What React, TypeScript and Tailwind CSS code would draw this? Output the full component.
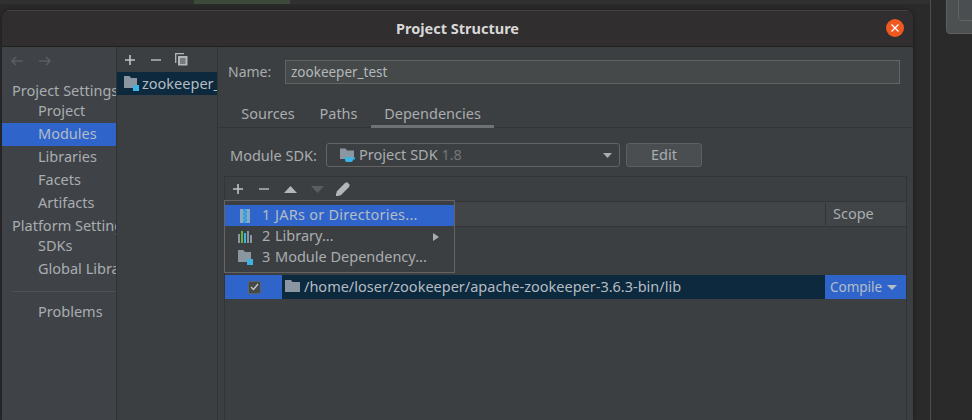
import React from "react";

const font = { fontFamily: '"Noto Sans", "Open Sans", sans-serif' };

function ModuleIcon() {
  return (
    <svg width="15" height="15" viewBox="0 0 15 15" className="shrink-0">
      <path d="M0 0h5.5L7 2h6v10H8v-3H0z" fill="#8a96a1" />
      <path d="M0 2h8v10H0z" fill="#8a96a1" />
      <rect x="9" y="9" width="6" height="6" fill="#3db3e3" />
    </svg>
  );
}

function Plus() {
  return (
    <svg width="12" height="12" viewBox="0 0 12 12" className="shrink-0">
      <path d="M6 1v10M1 6h10" stroke="#c0c4c6" strokeWidth="1.6" />
    </svg>
  );
}

function Minus() {
  return (
    <svg width="12" height="12" viewBox="0 0 12 12" className="shrink-0">
      <path d="M1 6h10" stroke="#b3b7b9" strokeWidth="1.6" />
    </svg>
  );
}

function SideItem({ label, active, h = "h-[23px] leading-[21px]" }: { label: string; active?: boolean; h?: string }) {
  return (
    <div className={`pl-[36px] whitespace-nowrap ${h} ${active ? "bg-[#2f65ca] text-[#b4bcc6]" : ""}`}>
      {label}
    </div>
  );
}

function SideHead({ label, h }: { label: string; h: string }) {
  return <div className={`pl-[10px] whitespace-nowrap ${h}`}>{label}</div>;
}

function MenuRow({ n, label, active, arrow, icon, wide }: { n: string; label: string; active?: boolean; arrow?: boolean; icon: React.ReactNode; wide?: boolean }) {
  return (
    <div className={`h-[21px] flex items-center relative whitespace-nowrap text-[14.5px] leading-[19px] ${active ? "bg-[#2f65ca] text-[#b4bcc6]" : "text-[#a9adb0]"}`}>
      <div className="w-[37px] pl-[14px] flex shrink-0">{icon}</div>
      <span className="w-[13px] -mt-[2px]">{n}</span>
      <span className={wide ? "tracking-[0.25px] -mt-[2px]" : "-mt-[2px]"}>{label}</span>
      {arrow && (
        <svg width="6" height="8" viewBox="0 0 6 8" className="absolute right-[15px] top-[7px]">
          <path d="M0 0l6 4-6 4z" fill="#a9adb0" />
        </svg>
      )}
    </div>
  );
}

export default function App() {
  return (
    <div style={font} className="w-[972px] h-[420px] overflow-hidden bg-[#2a2a2a] flex text-[14.5px] text-[#a9adb0]">
      <div className="w-[931px] shrink-0 border-r border-[#4e4e4e] flex flex-col">
        <div className="h-[4px] shrink-0 bg-[#303030] flex">
          <div className="ml-[194px] w-[96px] bg-[#3c4a3a]" />
        </div>
        <div className="ml-[2px] mt-[6px] w-[911px] flex-1 flex flex-col rounded-t-[8px] overflow-hidden shadow-[0_0_4px_#1c1c1c] min-h-0">
          {/* Title bar */}
          <div className="h-[37px] shrink-0 bg-[#302e2e] border-t border-[#464444] border-b-[#1f1f1f] border-b flex items-center relative">
            <div className="flex-1 text-center font-bold text-[14.5px] text-[#d8d8d8]">Project Structure</div>
            <div className="absolute right-[9px] top-[8px] w-[18px] h-[18px] rounded-full bg-[#ef5820] flex items-center justify-center">
              <svg width="8" height="8" viewBox="0 0 8 8">
                <path d="M0.5 0.5l7 7M7.5 0.5l-7 7" stroke="#ffffff" strokeWidth="1.3" />
              </svg>
            </div>
          </div>

          <div className="flex-1 flex min-h-0 bg-[#3c3f41]">
            {/* Settings sidebar */}
            <div className="w-[114px] shrink-0 bg-[#3f4347] border-r border-[#2f3133] overflow-hidden box-content">
              <div className="h-[32px] flex items-center gap-[14px] pl-[8px] pb-[4px]">
                <svg width="14" height="10" viewBox="0 0 14 10"><path d="M13 5H2M6 1L2 5l4 4" stroke="#5a5e61" strokeWidth="1.5" fill="none" /></svg>
                <svg width="14" height="10" viewBox="0 0 14 10"><path d="M1 5h11M8 1l4 4-4 4" stroke="#5a5e61" strokeWidth="1.5" fill="none" /></svg>
              </div>
              <SideHead label="Project Settings" h="h-[22px] leading-[22px]" />
              <SideItem label="Project" h="h-[22px] leading-[19px]" />
              <SideItem label="Modules" active />
              <SideItem label="Libraries" />
              <SideItem label="Facets" />
              <SideItem label="Artifacts" />
              <SideHead label="Platform Settings" h="h-[20px] leading-[20px]" />
              <SideItem label="SDKs" h="h-[22px] leading-[20px]" />
              <SideItem label="Global Libraries" h="h-[23px] leading-[23px]" />
              <div className="ml-[10px] mt-[11px] mb-[9px] h-px bg-[#4e5254]" />
              <SideItem label="Problems" />
            </div>

            {/* Modules column */}
            <div className="w-[100px] shrink-0 border-r border-[#323436] box-content overflow-hidden">
              <div className="h-[25px] flex items-center pl-[7px] gap-[14px]">
                <Plus />
                <Minus />
                <svg width="13" height="13" viewBox="0 0 13 13" className="-ml-[1px]">
                  <path d="M0.7 10V0.7H9" stroke="#b3b7b9" strokeWidth="1.3" fill="none" />
                  <rect x="3" y="3" width="9.5" height="9.5" fill="#b3b7b9" />
                  <path d="M5 6h5.5M5 8h5.5M5 10h5.5" stroke="#3c3f41" strokeWidth="1" />
                </svg>
              </div>
              <div className="h-[23px] bg-[#0d293e] flex items-center pl-[7px] gap-[3px] whitespace-nowrap text-[#b4bcc2] text-[14.5px]">
                <ModuleIcon />
                <span>zookeeper_test</span>
              </div>
            </div>

            {/* Detail */}
            <div className="flex-1 min-w-0 flex flex-col relative">
              <div className="h-[49px] flex items-center pl-[10px] pr-[13px] shrink-0">
                <span className="w-[57px] text-[14px]">Name:</span>
                <div className="flex-1 h-[24px] bg-[#45494a] border border-[#646464] pl-[5px] leading-[22px] text-[13.5px] text-[#b4b8bb]">zookeeper_test</div>
              </div>
              <div className="h-[32px] flex pl-[12px] border-b border-[#323436] shrink-0">
                <div className="w-[76px] text-center leading-[34px]">Sources</div>
                <div className="w-[65px] text-center leading-[34px]">Paths</div>
                <div className="w-[123px] text-center leading-[34px] h-[32px] border-b-[3px] border-[#6f7274]">Dependencies</div>
              </div>
              <div className="h-[48px] flex items-start pt-[15px] pl-[12px] shrink-0">
                <span className="w-[96px] whitespace-nowrap leading-[24px]">Module SDK:</span>
                <div className="w-[294px] h-[24px] border border-[#646464] rounded-[3px] bg-[#3c3f41] flex items-center pl-[13px] relative">
                  <svg width="16" height="16" viewBox="0 0 16 16" className="shrink-0">
                    <path d="M0 1.5h5.5L7 3.5h7V12H0z" fill="#8a96a1" />
                    <path d="M5 10h8v3a2 2 0 0 1-2 2H7a2 2 0 0 1-2-2zM13 10.5h2v2h-2" fill="#3db3e3" />
                  </svg>
                  <span className="ml-[3px] whitespace-nowrap">Project SDK <span className="text-[#72767a]">1.8</span></span>
                  <svg width="9" height="5" viewBox="0 0 9 5" className="absolute right-[7px] top-[9px]"><path d="M0 0h9L4.5 5z" fill="#a9adb0" /></svg>
                </div>
                <div className="ml-[6px] w-[76px] h-[24px] border border-[#5e6060] rounded-[3px] bg-[#4a4e50] text-center leading-[20px]">Edit</div>
              </div>

              {/* Dependency table */}
              <div className="ml-[6px] mr-[6px] flex-1 border border-[#323436] border-b-0 flex flex-col min-h-0">
                <div className="h-[24px] flex items-center pl-[7px] gap-[14px] shrink-0 border-b border-[#323436] box-content">
                  <Plus />
                  <Minus />
                  <svg width="13" height="7" viewBox="0 0 13 7"><path d="M0 7L6.5 0 13 7z" fill="#b3b7b9" /></svg>
                  <svg width="13" height="7" viewBox="0 0 13 7"><path d="M0 0l6.5 7L13 0z" fill="#5a5d5f" /></svg>
                  <svg width="14" height="14" viewBox="0 0 14 14" className="-ml-[2px]"><path d="M0.5 13.5l1-4L9.5 1.5l3 3-8 8zM10.5 0.5l3 3" stroke="#b3b7b9" strokeWidth="1.4" fill="#b3b7b9" /></svg>
                </div>
                <div className="h-[24px] flex bg-[#414548] border-b border-[#323436] box-content shrink-0">
                  <div className="flex-1" />
                  <div className="w-[81px] border-l border-[#323436] my-[1px] pl-[7px] leading-[20px]">Scope</div>
                </div>
                <div className="h-[48px] shrink-0" />
                <div className="h-[24px] flex shrink-0">
                  <div className="w-[57px] bg-[#2f65ca] flex items-center pl-[23px]">
                    <div className="w-[13px] h-[13px] rounded-[2px] border border-[#5f6366] bg-[#45494a] flex items-center justify-center">
                      <svg width="9" height="8" viewBox="0 0 9 8"><path d="M1 4l2.5 2.5L8 1" stroke="#c5c8ca" strokeWidth="1.4" fill="none" /></svg>
                    </div>
                  </div>
                  <div className="flex-1 bg-[#0d293e] flex items-center pl-[3px] text-[#b4bcc2] text-[14.5px] whitespace-nowrap">
                    <svg width="15" height="12" viewBox="0 0 15 12" className="shrink-0 mb-[2px]"><path d="M0 0h6l1.5 2H15v10H0z" fill="#8a96a1" /></svg>
                    <span className="ml-[4px]">/home/loser/zookeeper/apache-zookeeper-3.6.3-bin/lib</span>
                  </div>
                  <div className="w-[81px] bg-[#2f65ca] flex items-center pl-[5px] text-[13.5px] text-[#b4bcc6] relative">
                    Compile
                    <svg width="10" height="5" viewBox="0 0 10 5" className="ml-[5px]"><path d="M0 0h10L5 5z" fill="#b4bcc6" /></svg>
                  </div>
                </div>
              </div>

              {/* Popup menu */}
              <div className="absolute left-[6px] top-[153px] w-[231px] h-[73px] bg-[#3c3f41] border border-[#646464] pt-[4px]">
                <MenuRow
                  n="1"
                  label="JARs or Directories..."
                  active
                  wide
                  icon={
                    <svg width="10" height="14" viewBox="0 0 10 14" className="ml-[1px]">
                      <rect width="10" height="14" fill="#8fa6bd" />
                      <rect x="3" width="4" height="14" fill="#3db3e3" />
                      <path d="M3.5 1h1.5M5 3h1.5M3.5 5h1.5M5 7h1.5M3.5 9h1.5M5 11h1.5M3.5 13h1.5" stroke="#2f65ca" strokeWidth="1" />
                    </svg>
                  }
                />
                <MenuRow
                  n="2"
                  label="Library..."
                  arrow
                  icon={
                    <svg width="14" height="12" viewBox="0 0 14 12" className="-ml-[1px]">
                      <rect y="3" width="2" height="9" fill="#8a96a1" />
                      <rect x="3" width="2" height="12" fill="#62b543" />
                      <rect x="6" y="2" width="2" height="10" fill="#3db3e3" />
                      <rect x="9" width="2" height="12" fill="#8a96a1" />
                      <rect x="12" y="4" width="2" height="8" fill="#8a96a1" />
                    </svg>
                  }
                />
                <MenuRow n="3" label="Module Dependency..." icon={<div className="-ml-[1px] flex"><ModuleIcon /></div>} />
              </div>
            </div>
          </div>
        </div>
      </div>

      {/* Right background window */}
      <div className="flex-1 pl-[15px]">
        <div className="h-[36px] -mt-[2px] w-[60px] rounded-bl-[4px] bg-[#4d5050] border border-[#5e6060] pl-[11px] pb-[13px]">
          <div className="h-[22px] rounded-bl-[4px] border border-[#626565] bg-[#4a4e51]" />
        </div>
      </div>
    </div>
  );
}
